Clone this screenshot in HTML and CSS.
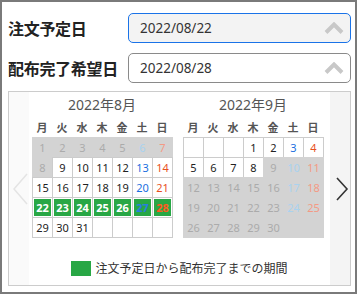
FILE: index.html
```html
<!DOCTYPE html>
<html lang="ja">
<head>
  <meta charset="UTF-8">
  <meta name="viewport" content="width=device-width, initial-scale=1.0">
  <title>配布日選択</title>
  <link rel="stylesheet" href="styles.css">
</head>
<body>

  <div class="panel">
    <div class="fields">
      <div class="field">
        <span class="field-label">注文予定日</span>
        <div class="date-input focus">
          <span>2022/08/22</span>
          <svg width="20" height="12" viewBox="0 0 20 12"><path d="M2 10.5 L10 2.5 L18 10.5" fill="none" stroke="#c8c8c8" stroke-width="4"/></svg>
        </div>
      </div>
      <div class="field">
        <span class="field-label">配布完了希望日</span>
        <div class="date-input">
          <span>2022/08/28</span>
          <svg width="20" height="12" viewBox="0 0 20 12"><path d="M2 10.5 L10 2.5 L18 10.5" fill="none" stroke="#c8c8c8" stroke-width="4"/></svg>
        </div>
      </div>
    </div>

    <div class="calendar">
      <div class="nav prev">
        <svg width="20" height="40" viewBox="0 0 20 40"><path d="M18 5 L5 20 L18 35" fill="none" stroke="#e4e4e4" stroke-width="1.5"/></svg>
      </div>

      <div class="months-area">
        <div class="months">
          <!-- 8月 -->
          <div class="month">
            <div class="month-title">2022年8月</div>
            <div class="week">
              <span>月</span><span>火</span><span>水</span><span>木</span><span>金</span><span>土</span><span>日</span>
            </div>
            <div class="days">
              <span class="day off">1</span><span class="day off">2</span><span class="day off">3</span><span class="day off">4</span><span class="day off">5</span><span class="day off sat">6</span><span class="day off sun">7</span>
              <span class="day off">8</span><span class="day">9</span><span class="day">10</span><span class="day">11</span><span class="day">12</span><span class="day sat">13</span><span class="day sun">14</span>
              <span class="day">15</span><span class="day">16</span><span class="day">17</span><span class="day">18</span><span class="day">19</span><span class="day sat">20</span><span class="day sun">21</span>
              <span class="day range">22</span><span class="day range">23</span><span class="day range">24</span><span class="day range">25</span><span class="day range">26</span><span class="day range sat">27</span><span class="day range sun">28</span>
              <span class="day">29</span><span class="day">30</span><span class="day">31</span><span class="day"></span><span class="day"></span><span class="day"></span><span class="day"></span>
            </div>
          </div>

          <!-- 9月 -->
          <div class="month">
            <div class="month-title">2022年9月</div>
            <div class="week">
              <span>月</span><span>火</span><span>水</span><span>木</span><span>金</span><span>土</span><span>日</span>
            </div>
            <div class="days">
              <span class="day"></span><span class="day"></span><span class="day"></span><span class="day">1</span><span class="day">2</span><span class="day sat">3</span><span class="day sun">4</span>
              <span class="day">5</span><span class="day">6</span><span class="day">7</span><span class="day">8</span><span class="day off">9</span><span class="day off sat">10</span><span class="day off sun">11</span>
              <span class="day off">12</span><span class="day off">13</span><span class="day off">14</span><span class="day off">15</span><span class="day off">16</span><span class="day off sat">17</span><span class="day off sun">18</span>
              <span class="day off">19</span><span class="day off">20</span><span class="day off">21</span><span class="day off">22</span><span class="day off">23</span><span class="day off sat">24</span><span class="day off sun">25</span>
              <span class="day off">26</span><span class="day off">27</span><span class="day off">28</span><span class="day off">29</span><span class="day off">30</span><span class="day off"></span><span class="day off"></span>
            </div>
          </div>
        </div>

        <div class="legend">
          <span class="legend-swatch"></span>
          <span>注文予定日から配布完了までの期間</span>
        </div>
      </div>

      <div class="nav next">
        <svg width="20" height="40" viewBox="0 0 20 40"><path d="M7 9 L17 20 L7 31" fill="none" stroke="#333" stroke-width="1.6"/></svg>
      </div>
    </div>
  </div>

</body>
</html>
```

FILE: styles.css
```css
body {
  margin: 0;
  font-family: "Noto Sans", "Noto Sans CJK JP", sans-serif;
  background: #fff;
}

.panel {
  box-sizing: border-box;
  width: 357px;
  height: 294px;
  border: 2px solid #7a7a7a;
  padding: 11px 4px 0 6px;
}

.fields {
  display: flex;
  flex-direction: column;
  gap: 10px;
  margin-bottom: 8px;
}

.field {
  display: flex;
  align-items: center;
  height: 30px;
}

.field-label {
  width: 120px;
  font-family: "Noto Sans CJK JP", sans-serif;
  font-weight: bold;
  font-size: 16px;
  letter-spacing: -0.3px;
  color: #222;
}

.date-input {
  flex: 1;
  box-sizing: border-box;
  height: 30px;
  display: flex;
  align-items: center;
  padding: 0 6px 0 11px;
  border: 1px solid #8a8a8a;
  border-radius: 5px;
  background: #fff;
  font-size: 13.5px;
  color: #333;
}

.date-input.focus {
  border-color: #1a73e8;
  background: #f3f3f3;
}

.date-input svg {
  margin-left: auto;
}

.calendar {
  display: flex;
  box-sizing: border-box;
  height: 195px;
  border: 1px solid #ccc;
}

.nav {
  width: 20px;
  display: flex;
  align-items: center;
  justify-content: center;
}

.nav.prev {
  background: #fafafa;
}

.nav.next {
  background: #f4f4f4;
}

.months-area {
  width: 301px;
  display: flex;
  flex-direction: column;
}

.months {
  display: flex;
  gap: 11px;
  padding: 3px 0 0 3px;
}

.month {
  width: 140px;
}

.month-title {
  height: 20px;
  line-height: 20px;
  margin-bottom: 4px;
  text-align: center;
  font-size: 14px;
  color: #555;
}

.week {
  display: grid;
  grid-template-columns: repeat(7, 20px);
  height: 18px;
  line-height: 18px;
  text-align: center;
  font-size: 11px;
  font-weight: bold;
  color: #555;
}

.days {
  display: grid;
  grid-template-columns: repeat(7, 20px);
  grid-auto-rows: 20px;
}

.day {
  box-sizing: border-box;
  width: 21px;
  height: 21px;
  margin: 0 -1px -1px 0;
  border: 1px solid #ccc;
  background: #fff;
  text-align: center;
  font-size: 11px;
  line-height: 19px;
  color: #222;
}

.day.sat {
  color: #1a6fe0;
}

.day.sun {
  color: #e8501e;
}

.day.off {
  background: #d3d3d3;
  border-color: #d3d3d3;
  color: #ababab;
}

.day.off.sat {
  color: #a9d2ef;
}

.day.off.sun {
  color: #f49a85;
}

.day.range {
  background: #28a745;
  box-shadow: inset 0 0 0 1px #fff;
  color: #fff;
  font-weight: bold;
}

.day.range.sat {
  color: #2a7de1;
}

.day.range.sun {
  color: #ff5a1f;
}

.legend {
  display: flex;
  justify-content: center;
  align-items: center;
  margin-top: 22px;
  font-size: 12px;
  color: #333;
}

.legend-swatch {
  width: 20px;
  height: 15px;
  margin-right: 4px;
  background: #28a745;
}
```
